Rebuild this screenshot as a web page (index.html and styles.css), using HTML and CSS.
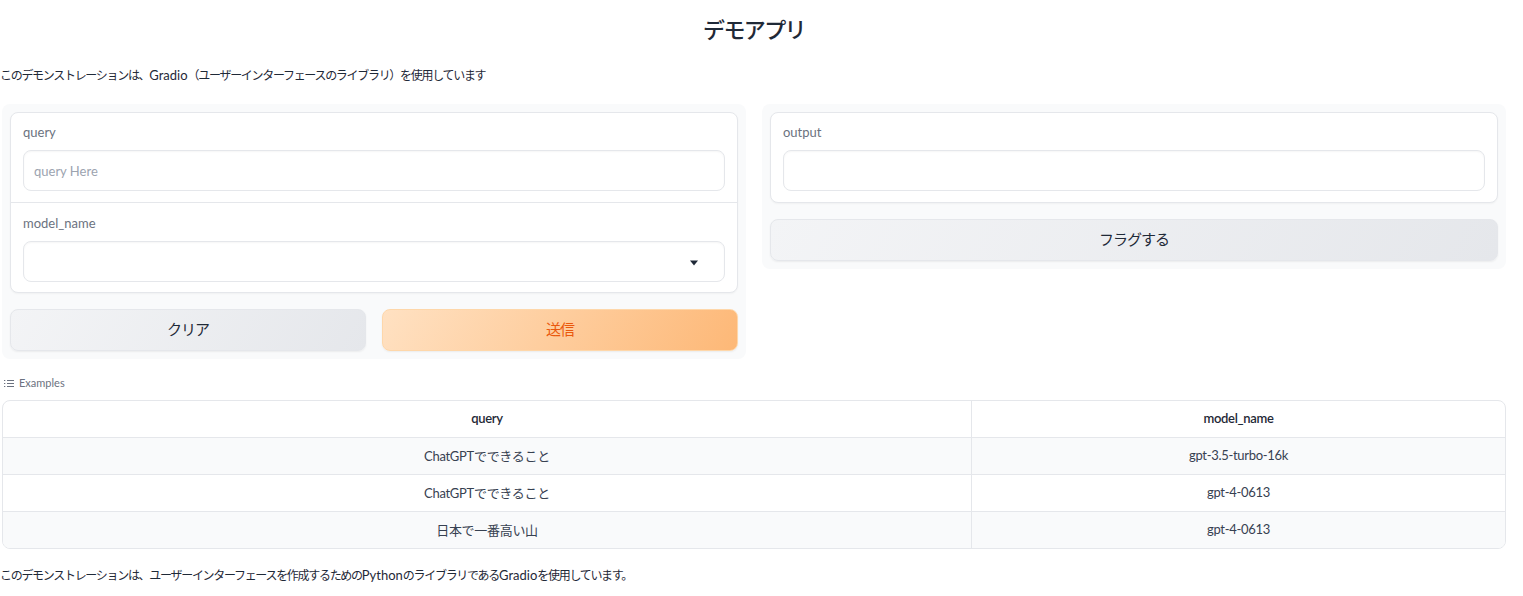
FILE: index.html
```html
<!DOCTYPE html>
<html lang="ja">
<head>
<meta charset="utf-8">
<title>デモアプリ</title>
<link rel="stylesheet" href="styles.css">
</head>
<body>
<div class="app">
  <h1 class="title">デモアプリ</h1>
  <p class="desc">このデモンストレーションは、<span class="lat">Gradio</span>（ユーザーインターフェースのライブラリ）を使用しています</p>

  <div class="row">
    <div class="panel">
      <div class="block">
        <div class="field">
          <div class="label">query</div>
          <div class="input placeholder">query Here</div>
        </div>
        <div class="field divided">
          <div class="label">model_name</div>
          <div class="input select">
            <svg class="caret" width="8" height="6" viewBox="0 0 8 6"><path d="M0 0.5 H8 L4 5.5 Z" fill="#1f2937"/></svg>
          </div>
        </div>
      </div>
      <div class="btn-row">
        <div class="btn secondary">クリア</div>
        <div class="btn primary">送信</div>
      </div>
    </div>

    <div class="panel">
      <div class="block">
        <div class="field">
          <div class="label">output</div>
          <div class="input"></div>
        </div>
      </div>
      <div class="btn-row">
        <div class="btn secondary">フラグする</div>
      </div>
    </div>
  </div>

  <div class="examples-label">
    <svg width="10" height="9" viewBox="0 0 10 9"><g fill="#6b7280"><rect x="0" y="1" width="1.3" height="1"/><rect x="0" y="4" width="1.3" height="1"/><rect x="0" y="7" width="1.3" height="1"/><rect x="3" y="1" width="7" height="1"/><rect x="3" y="4" width="7" height="1"/><rect x="3" y="7" width="7" height="1"/></g></svg>
    <span>Examples</span>
  </div>

  <div class="table">
    <div class="tr head">
      <div class="td c1">query</div>
      <div class="td c2">model_name</div>
    </div>
    <div class="tr alt">
      <div class="td c1">ChatGPTでできること</div>
      <div class="td c2">gpt-3.5-turbo-16k</div>
    </div>
    <div class="tr">
      <div class="td c1">ChatGPTでできること</div>
      <div class="td c2">gpt-4-0613</div>
    </div>
    <div class="tr alt last">
      <div class="td c1">日本で一番高い山</div>
      <div class="td c2">gpt-4-0613</div>
    </div>
  </div>

  <p class="footer">このデモンストレーションは、ユーザーインターフェースを作成するための<span class="lat">Python</span>のライブラリである<span class="lat">Gradio</span>を使用しています。</p>
</div>
</body>
</html>
```

FILE: styles.css
```css
* { box-sizing: border-box; }

body {
  margin: 0;
  background: #ffffff;
  font-family: Lato, "Noto Sans CJK JP", sans-serif;
  color: #374151;
}

.app {
  width: 1504px;
  margin-left: 2px;
}

.title {
  margin: 0;
  padding-top: 15px;
  height: 46px;
  line-height: 30px;
  text-align: center;
  font-size: 22px;
  font-weight: 500;
  letter-spacing: -1.6px;
  color: #1f2937;
}

.desc {
  margin: 0;
  margin-left: -2px;
  padding-top: 19px;
  height: 58px;
  line-height: 20px;
  font-size: 12px;
  letter-spacing: -1.3px;
  color: #1f2937;
}

.lat {
  letter-spacing: 0;
  font-size: 13px;
}

.row {
  display: flex;
  gap: 16px;
  align-items: flex-start;
}

.panel {
  flex: 1;
  background: #f9fafb;
  border-radius: 8px;
  padding: 8px;
  display: flex;
  flex-direction: column;
  gap: 16px;
}

.block {
  background: #ffffff;
  border: 1px solid #e5e7eb;
  border-radius: 8px;
  box-shadow: 0 1px 2px rgba(0,0,0,0.04);
}

.field {
  padding: 9px 12px 11px;
}

.field.divided {
  border-top: 1px solid #e5e7eb;
  padding-top: 10px;
  padding-bottom: 10px;
}

.label {
  height: 20px;
  line-height: 20px;
  margin-bottom: 8px;
  font-size: 13px;
  color: #6b7280;
}

.input {
  height: 41px;
  border: 1px solid #e5e7eb;
  border-radius: 8px;
  background: #ffffff;
  box-shadow: inset 0 1px 2px rgba(0,0,0,0.04);
  padding: 0 10px;
  display: flex;
  align-items: center;
  font-size: 13px;
}

.placeholder { color: #9ca3af; }

.select { justify-content: flex-end; padding-right: 26px; }
.caret { display: block; margin-top: 2px; }

.btn-row {
  display: flex;
  gap: 16px;
}

.btn {
  flex: 1;
  height: 42px;
  border-radius: 8px;
  display: flex;
  align-items: center;
  justify-content: center;
  padding-bottom: 3px;
  font-size: 15px;
  font-weight: 400;
  letter-spacing: -1px;
  box-shadow: 0 1px 2px rgba(0,0,0,0.06);
}

.secondary {
  background: linear-gradient(120deg, #f3f4f6, #e5e7eb);
  color: #1f2937;
  border: 1px solid #e5e7eb;
}

.primary {
  background: linear-gradient(120deg, #ffe1c2, #fdb877);
  color: #ea580c;
  border: 1px solid #fed7aa;
}

.examples-label {
  margin-top: 16px;
  height: 25px;
  display: flex;
  align-items: flex-start;
  gap: 5px;
  padding-left: 2px;
  font-size: 11px;
  line-height: 16px;
  color: #6b7280;
}

.examples-label svg { margin-top: 4px; }

.table {
  border: 1px solid #e5e7eb;
  border-radius: 8px;
  overflow: hidden;
}

.tr {
  display: flex;
  height: 37px;
  border-bottom: 1px solid #e5e7eb;
}

.tr.last { border-bottom: none; height: 36px; }

.tr.alt { background: #f9fafb; }

.td {
  display: flex;
  align-items: center;
  justify-content: center;
  padding-bottom: 2px;
  font-size: 13px;
  color: #374151;
  letter-spacing: -0.3px;
}

.c1 { width: 969px; border-right: 1px solid #e5e7eb; }
.c2 { flex: 1; }

.head .td { font-weight: 600; color: #1f2937; }

.footer {
  margin: 0;
  margin-left: -2px;
  padding-top: 16px;
  line-height: 20px;
  font-size: 12px;
  letter-spacing: -1.3px;
  color: #1f2937;
}
```
